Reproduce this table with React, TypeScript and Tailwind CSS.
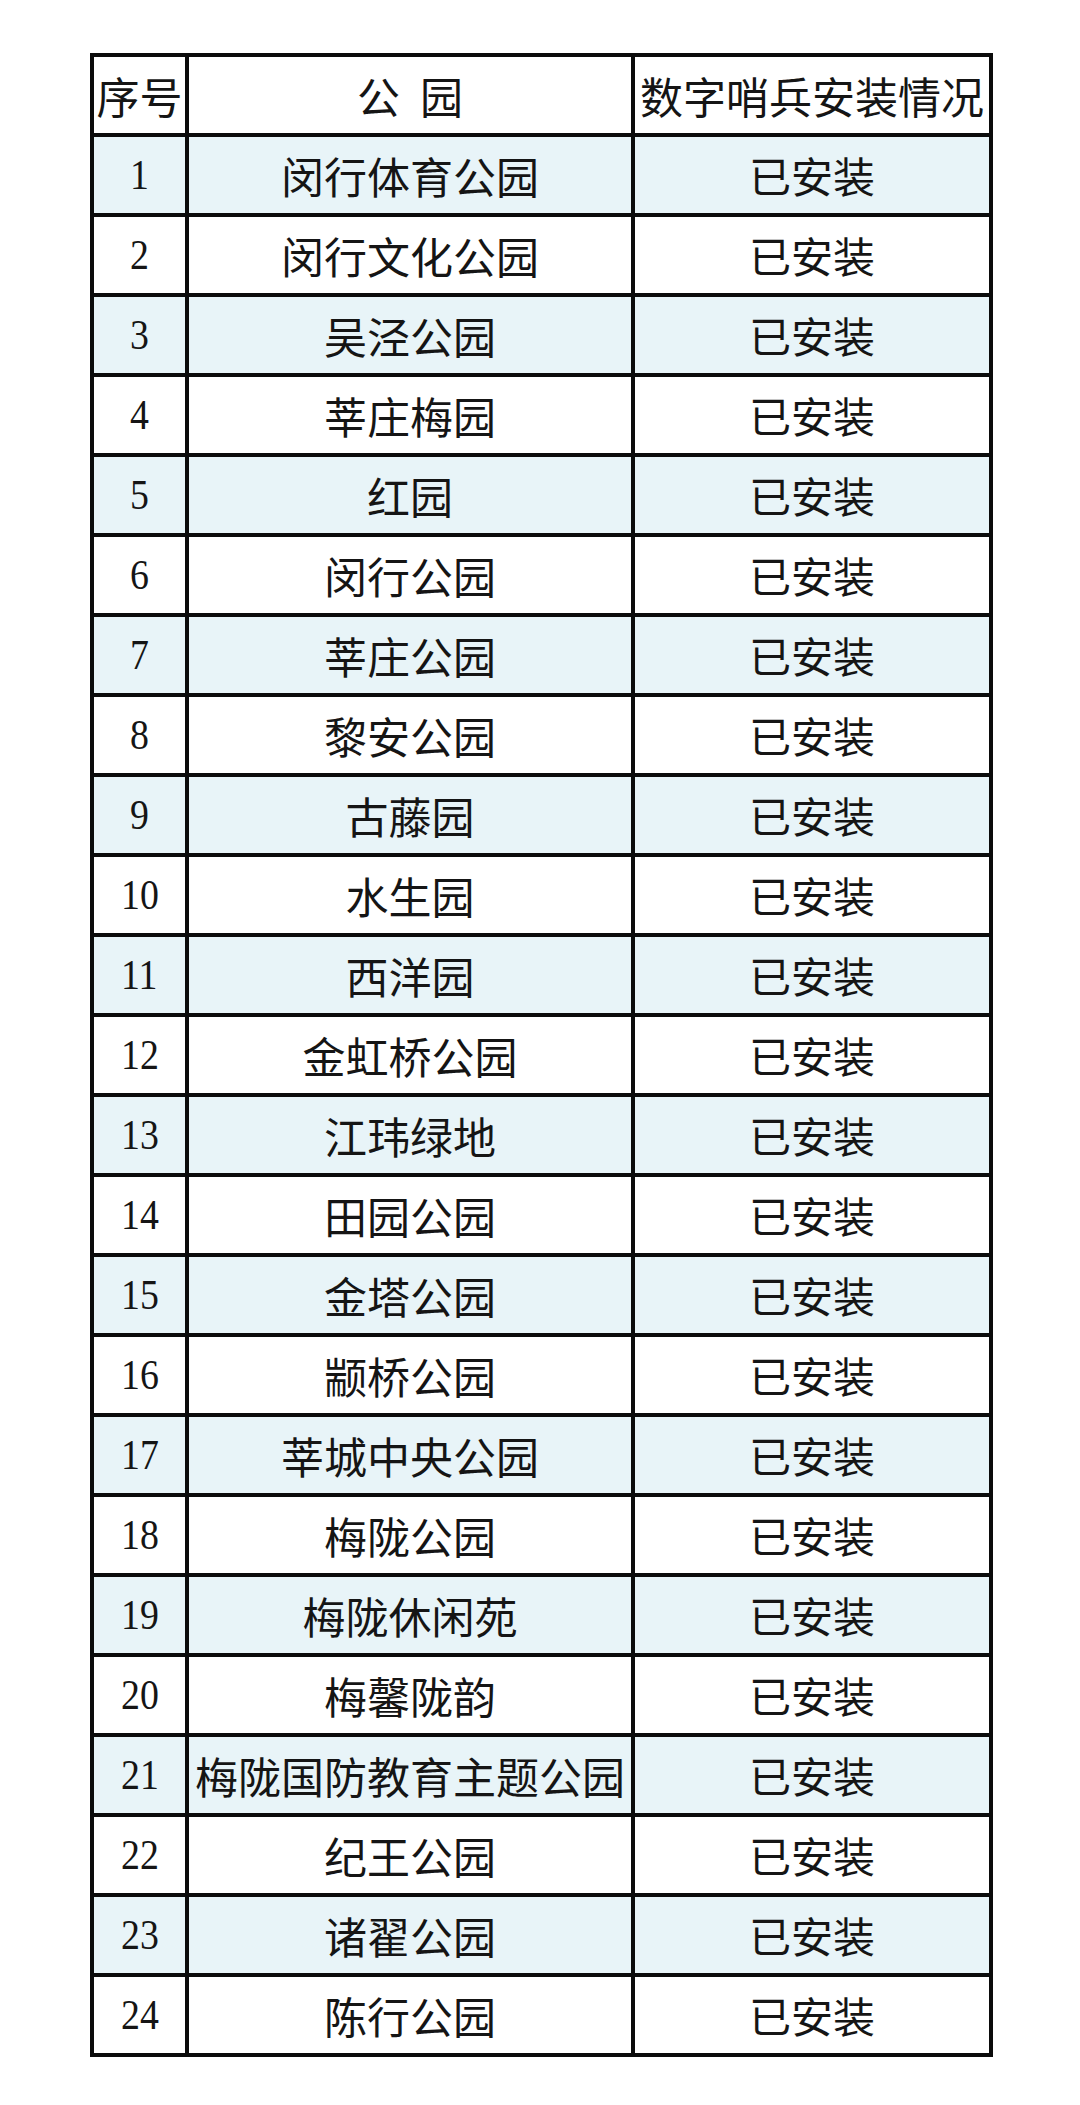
import React from 'react';

const parks: string[] = [
  '闵行体育公园',
  '闵行文化公园',
  '吴泾公园',
  '莘庄梅园',
  '红园',
  '闵行公园',
  '莘庄公园',
  '黎安公园',
  '古藤园',
  '水生园',
  '西洋园',
  '金虹桥公园',
  '江玮绿地',
  '田园公园',
  '金塔公园',
  '颛桥公园',
  '莘城中央公园',
  '梅陇公园',
  '梅陇休闲苑',
  '梅馨陇韵',
  '梅陇国防教育主题公园',
  '纪王公园',
  '诸翟公园',
  '陈行公园',
];

const cjk = "font-['Noto_Sans_CJK_SC','Noto_Sans',sans-serif]";
const serif = "font-['Liberation_Serif','Noto_Sans_CJK_SC',serif]";

const App: React.FC = () => {
  return (
    <div className="min-h-[2105px] w-[1080px] bg-white pt-[53px] pl-[90px]">
      <div className="grid w-fit grid-cols-[91px_442px_354px] gap-[4px] bg-[#0b0b0b] p-[4px] text-[#151515]">
        {/* Header */}
        <div className={`flex h-[76px] items-center justify-center bg-white text-[43px] leading-none whitespace-nowrap ${cjk}`}>
          序号
        </div>
        <div className={`flex h-[76px] items-center justify-center gap-[20px] bg-white text-[43px] leading-none ${cjk}`}>
          <span>公</span>
          <span>园</span>
        </div>
        <div className={`flex h-[76px] items-center justify-center bg-white text-[43px] leading-none whitespace-nowrap ${cjk}`}>
          数字哨兵安装情况
        </div>

        {parks.map((name, i) => {
          const tint = i % 2 === 0 ? 'bg-[#e8f4f8]' : 'bg-white';
          return (
            <React.Fragment key={name}>
              <div className={`flex h-[76px] items-center justify-center text-[42px] leading-none ${tint} ${serif}`}>
                <span className="inline-block scale-x-[0.9]">{i + 1}</span>
              </div>
              <div className={`flex h-[76px] items-center justify-center text-[43px] leading-none whitespace-nowrap ${tint} ${cjk}`}>
                {name}
              </div>
              <div className={`flex h-[76px] items-center justify-center text-[42px] leading-none ${tint} ${cjk}`}>
                已安装
              </div>
            </React.Fragment>
          );
        })}
      </div>
    </div>
  );
};

export default App;
